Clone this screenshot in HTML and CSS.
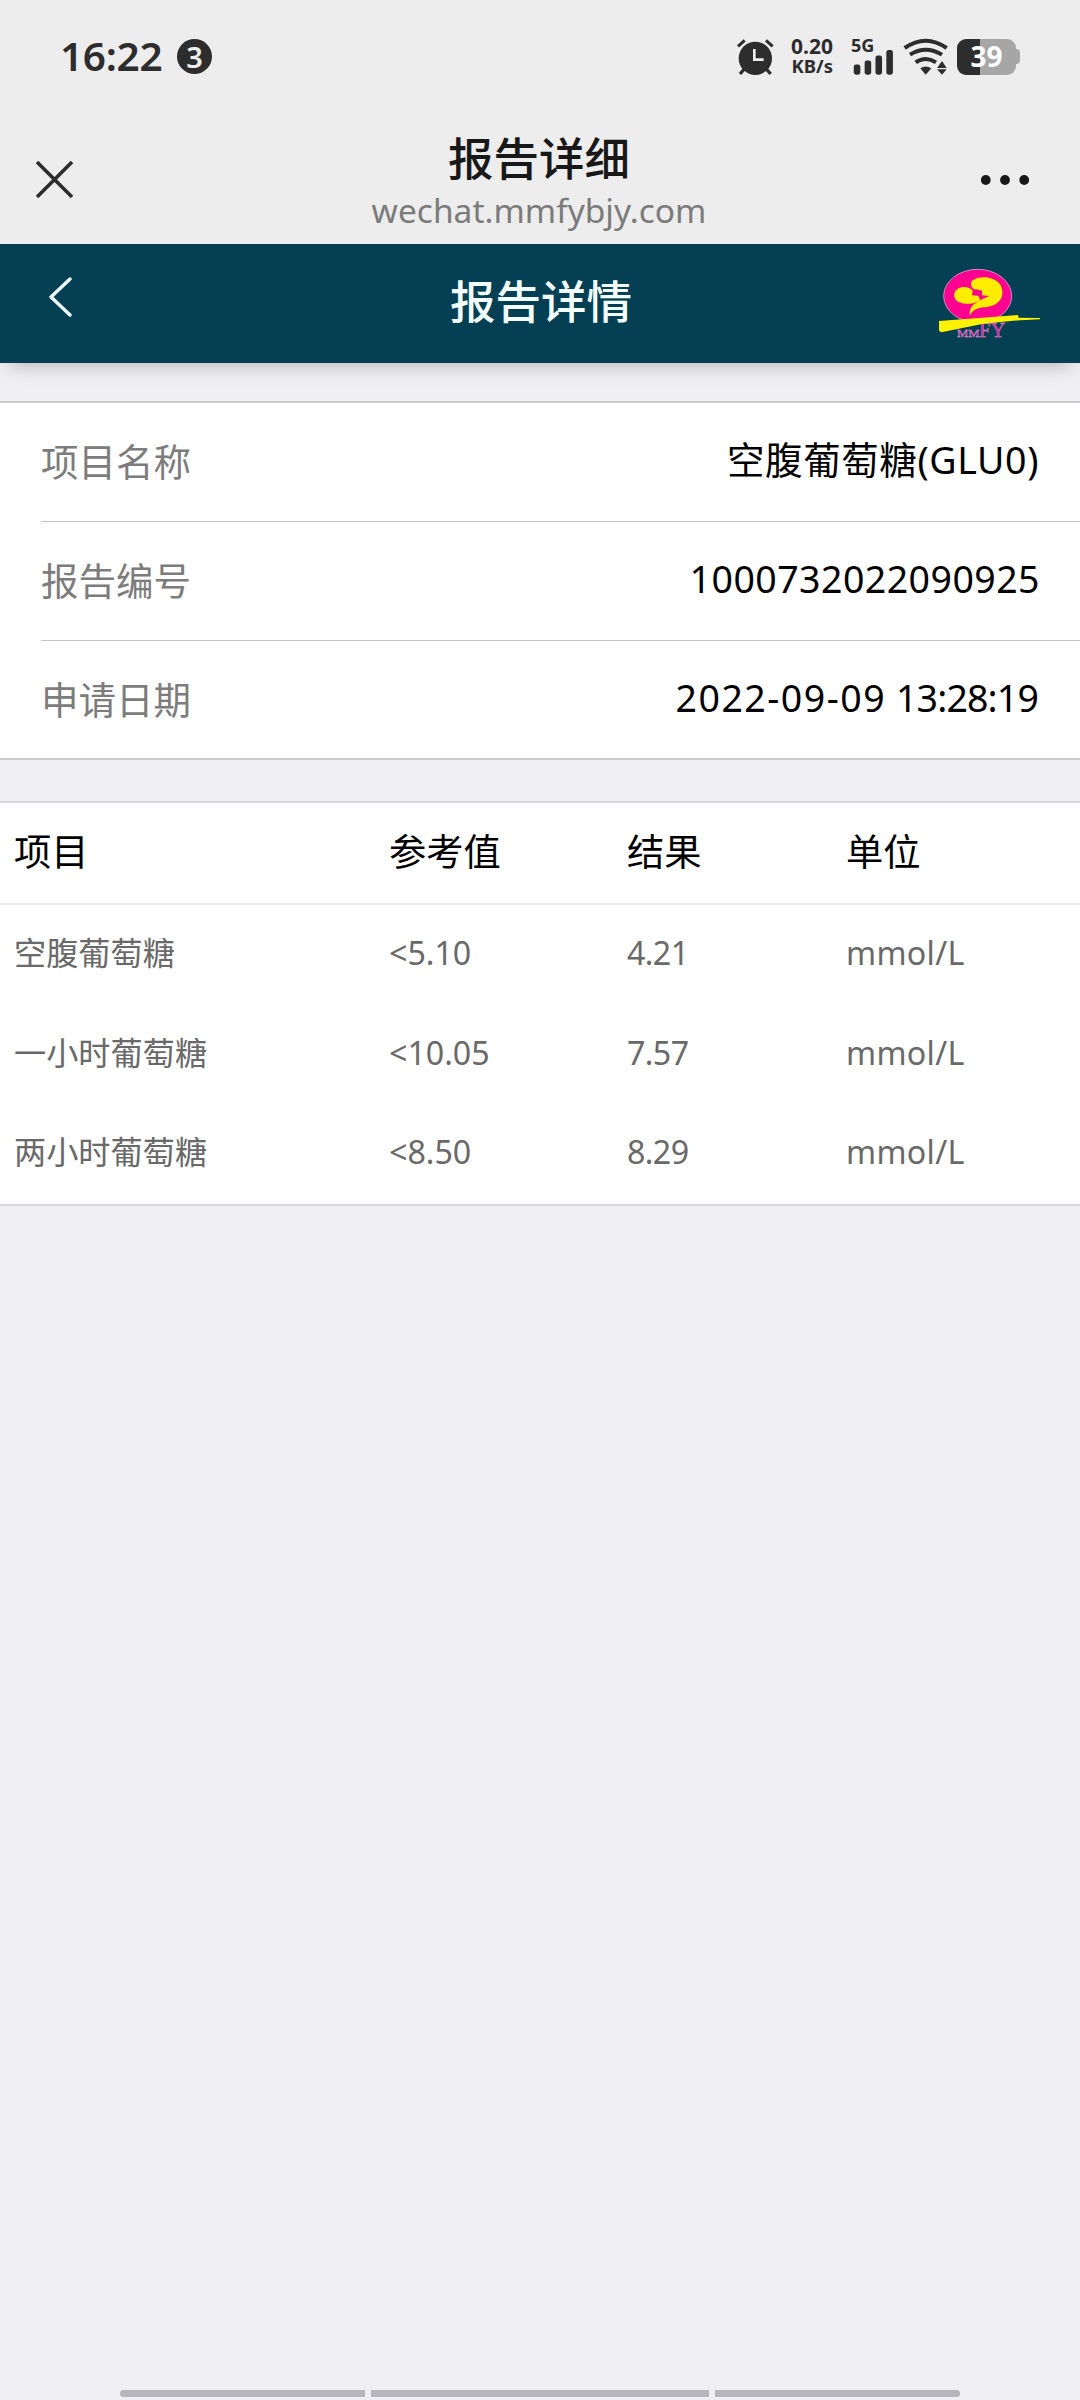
FILE: index.html
```html
<!DOCTYPE html>
<html lang="zh-CN">
<head>
<meta charset="utf-8">
<title>报告详细</title>
<link rel="stylesheet" href="styles.css">
</head>
<body>
<div class="status-bar">
  <span class="clock">16:22</span>
  <span class="badge">3</span>
  <div class="status-icons">
    <svg class="alarm" viewBox="52 54 114 114" width="38" height="38">
      <circle cx="110" cy="115" r="50" fill="#2d2d2d"/>
      <path d="M58 79 78 61M162 79 142 61" stroke="#2d2d2d" stroke-width="9"/>
      <path d="M77 147 64 162M143 147 156 162" stroke="#2d2d2d" stroke-width="10"/>
      <path d="M107 87V119H135" fill="none" stroke="#ededed" stroke-width="8"/>
    </svg>
    <div class="speed">0.20<br><small>KB/s</small></div>
    <div class="signal">
      <span class="network">5G</span>
      <svg viewBox="398 90 122 76" width="41" height="25" fill="#2d2d2d">
        <rect x="399" y="134" width="20" height="31" rx="7"/>
        <rect x="432" y="122" width="20" height="43" rx="7"/>
        <rect x="465" y="107" width="20" height="58" rx="7"/>
        <rect x="498" y="90" width="20" height="75" rx="7"/>
      </svg>
    </div>
    <svg class="wifi" viewBox="549 54 138 114" width="46" height="38">
      <g fill="none" stroke="#2d2d2d" stroke-width="12">
        <path d="M554 84Q617 40 680 84"/>
        <path d="M570 104Q617 74 666 104"/>
        <path d="M587 127Q617 107 648 127"/>
      </g>
      <path d="M601 145Q617 134 634 145L617 164ZM651 144 666 123 680 144ZM651 148H680L666 164Z" fill="#2d2d2d"/>
    </svg>
    <div class="battery"><span class="level">39</span></div>
  </div>
</div>
<div class="browser-bar">
  <svg class="close" viewBox="0 0 38 38" width="38" height="38"><path d="M1 1 36 36M36 1 1 36" stroke="#2d2d2d" stroke-width="3.6"/></svg>
  <div class="page-info">
    <div class="page-title">报告详细</div>
    <div class="page-host">wechat.mmfybjy.com</div>
  </div>
  <svg class="more" viewBox="0 0 48 10" width="48" height="10" fill="#181818"><circle cx="4.8" cy="5" r="4.9"/><circle cx="24" cy="5" r="4.9"/><circle cx="43.2" cy="5" r="4.9"/></svg>
</div>
<header class="app-bar">
  <svg class="back" viewBox="0 0 24 40" width="24" height="40"><path d="M22 2 3 20 22 38" fill="none" stroke="#f0ffff" stroke-width="3.4" stroke-linecap="round" stroke-linejoin="round"/></svg>
  <h1 class="app-title">报告详情</h1>
  <svg class="logo" viewBox="114 414 312 216" width="104" height="72">
    <ellipse cx="233" cy="498" rx="102" ry="80" fill="#ff0090" stroke="#d9a3d3" stroke-width="2.5"/>
    <path d="M118 570H360V600H118Z" fill="#043f54"/>
    <path d="M162 496C166 465 205 466 218 482L216 496 235 497 241 511 220 520C192 525 163 518 162 496Z" fill="#ffed00"/>
    <path d="M214 466C207 448 238 439 260 442C294 448 309 466 307 492C304 520 275 532 249 532C226 535 215 545 210 557C204 530 228 516 243 509L268 498 246 496 246 482 229 478C220 479 215 474 214 466Z" fill="#ffed00"/>
    <text x="171" y="621" class="logo-small" textLength="67" lengthAdjust="spacingAndGlyphs">MM</text>
    <text x="237" y="621" class="logo-large" textLength="79" lengthAdjust="spacingAndGlyphs">FY</text>
    <path d="M117 573 354 555 356 563 420 564 420 568 340 572 250 581 124 607 117 602Z" fill="#fff200"/>
  </svg>
</header>
<main>
  <dl class="summary">
    <div class="summary-row"><dt>项目名称</dt><dd class="name">空腹葡萄糖(GLU0)</dd></div>
    <div class="summary-row"><dt>报告编号</dt><dd class="number">1000732022090925</dd></div>
    <div class="summary-row"><dt>申请日期</dt><dd><span class="date">2022-09-09</span> <span class="time">13:28:19</span></dd></div>
  </dl>
  <div class="results">
    <div class="results-row results-head"><span>项目</span><span>参考值</span><span>结果</span><span>单位</span></div>
    <div class="results-row"><span>空腹葡萄糖</span><span>&lt;5.10</span><span class="value">4.21</span><span class="measure">mmol/L</span></div>
    <div class="results-row"><span>一小时葡萄糖</span><span>&lt;10.05</span><span class="value">7.57</span><span class="measure">mmol/L</span></div>
    <div class="results-row"><span>两小时葡萄糖</span><span>&lt;8.50</span><span class="value">8.29</span><span class="measure">mmol/L</span></div>
  </div>
</main>
<footer class="nav-hint"><i class="side left"></i><i class="middle"></i><i class="side right"></i></footer>
</body>
</html>
```
FILE: styles.css
```css
* { box-sizing: border-box; margin: 0; padding: 0; }

body {
  display: flex;
  flex-direction: column;
  width: 1080px;
  height: 2400px;
  background: #efeff4;
  font-family: "Noto Sans", "Noto Sans CJK SC", sans-serif;
  color: #000;
}

svg { display: block; flex: none; }

.status-bar {
  display: flex;
  align-items: center;
  height: 113px;
  padding: 0 64px 0 60px;
  background: #ededed;
  color: #2d2d2d;
}
.clock { width: 117px; font-size: 40.5px; font-weight: 600; line-height: 56px; letter-spacing: -.3px; margin-top: -1px; }
.badge {
  width: 35px;
  height: 35px;
  border-radius: 50%;
  background: #2d2d2d;
  color: #ededed;
  font-size: 29px;
  font-weight: 600;
  line-height: 35px;
  text-align: center;
}
.status-icons { display: flex; align-items: center; margin-left: auto; }
.speed { width: 48px; margin: -1px 18px 0 11px; font-size: 21px; font-weight: 700; line-height: 19.5px; text-align: right; white-space: nowrap; }
.speed small { font-size: 18.5px; }
.signal { display: flex; flex-direction: column; width: 43px; height: 38px; margin-right: 9px; }
.network { height: 12px; font-size: 18px; font-weight: 700; line-height: 15px; }
.signal svg { margin-left: 2px; }
.wifi { margin-right: 8px; }
.battery {
  position: relative;
  width: 59px;
  height: 36px;
  border-radius: 9px;
  background: linear-gradient(90deg, #2d2d2d 23px, #a6a6a6 23px);
  color: #fff;
  text-align: center;
}
.battery::after {
  content: "";
  position: absolute;
  left: 59px;
  top: 10px;
  width: 4px;
  height: 15px;
  border-radius: 0 4px 4px 0;
  background: #a6a6a6;
}
.level { font-size: 28px; font-weight: 700; line-height: 35px; }

.browser-bar {
  display: grid;
  grid-template-columns: 180px 1fr 180px;
  align-items: center;
  height: 131px;
  padding: 2px 51px 0 36px;
  background: #ededed;
}
.more { justify-self: end; }
.page-info { margin-left: 13px; text-align: center; }
.page-title { color: #181818; font-size: 45.5px; font-weight: 500; line-height: 61px; }
.page-host { color: #7b7b7b; font-size: 33.5px; line-height: 42px; }

.app-bar {
  display: flex;
  align-items: center;
  justify-content: space-between;
  height: 119px;
  padding: 0 38px 0 48px;
  background: #043f54;
  box-shadow: 0 11px 18px -9px rgba(0, 0, 0, .25);
}
.back { margin: -13px 72px 0 0; }
.app-title { margin-top: -5px; color: #f4ffff; font-size: 45.5px; font-weight: 500; line-height: 60px; }
.logo-small, .logo-large { font-family: "Liberation Serif", serif; fill: #d41ba4; stroke: #e8a7dc; stroke-width: 1; }
.logo-small { font-size: 34px; }
.logo-large { font-size: 62px; }

.summary {
  margin-top: 38px;
  padding-left: 41px;
  border-top: 2px solid #cacacf;
  border-bottom: 2px solid #cacacf;
  background: #fff;
}
.summary-row {
  display: flex;
  align-items: center;
  justify-content: space-between;
  height: 119px;
  padding-right: 40px;
  border-bottom: 1px solid #c4c4c6;
  font-size: 37.5px;
  line-height: 56px;
}
.summary-row:last-child { height: 117px; border-bottom: 0; }
.summary-row dt { color: #7c7c7c; }
.summary-row dd { padding-bottom: 4px; }
.name { letter-spacing: .6px; margin-right: 1px; }
.number { letter-spacing: .45px; }
.date { letter-spacing: 1.5px; }
.time { margin-right: 2px; letter-spacing: -.85px; }

.results {
  margin-top: 41px;
  border-top: 2px solid #d7d7da;
  border-bottom: 2px solid #d7d7da;
  background: #fff;
}
.results-row {
  display: grid;
  grid-template-columns: 375px 238px 219px 1fr;
  align-items: center;
  height: 99.5px;
  padding: 0 0 3px 14px;
  color: #696969;
  font-size: 32.2px;
  line-height: 48px;
}
.results-head {
  height: 102px;
  border-bottom: 2px solid #ececec;
  color: #000;
  font-size: 37.3px;
}
.value { letter-spacing: -.6px; }
.measure { letter-spacing: .3px; }

.nav-hint { display: flex; gap: 6px; margin-top: auto; padding: 0 120px 3px; }
.nav-hint i { height: 7px; background: #b6b5bb; }
.side { width: 245px; }
.middle { flex: 1; }
.left { border-radius: 4px 0 0 4px; }
.right { border-radius: 0 4px 4px 0; }
```
